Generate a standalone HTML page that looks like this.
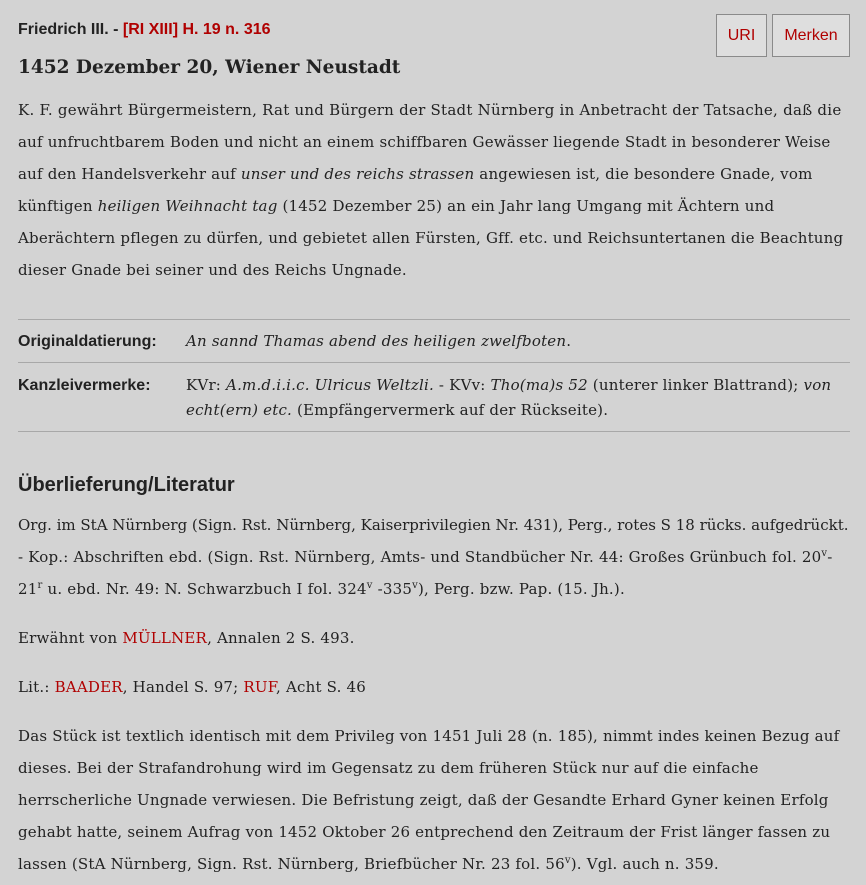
<!DOCTYPE html>
<html><head><meta charset="utf-8"><style>
body{margin:0;background:#d3d3d3;width:866px;height:885px;overflow:hidden;position:relative;color:#222;}
.s{font-family:"Liberation Sans",sans-serif;}
.f{font-family:"DejaVu Serif","Liberation Serif",serif;font-size:15px;letter-spacing:0.2px;}
.l{position:absolute;left:18px;white-space:nowrap;line-height:20px;}
.s.l{letter-spacing:0;}
.r{color:#b00000;}
.hr{position:absolute;left:18px;width:832px;height:1px;background:#a8a8a8;}
.btn{position:absolute;top:14px;height:43px;border:1px solid #8a8a8a;background:#dedede;color:#b00000;font-family:"Liberation Sans",sans-serif;font-size:16px;line-height:41px;text-align:center;box-sizing:border-box;}
sup{font-size:10px;line-height:0;}
i{font-style:italic;}
</style></head><body>
<div class="l s" style="top:20px;font-size:16px;font-weight:bold;">Friedrich III. - <span class="r">[RI XIII] H. 19 n. 316</span></div>
<div class="btn" style="left:716px;width:51px;">URI</div>
<div class="btn" style="left:772px;width:78px;">Merken</div>
<div class="l f" style="top:56px;font-size:18.5px;letter-spacing:0;font-weight:bold;line-height:24px;">1452 Dezember 20, Wiener Neustadt</div>

<div class="l f" style="top:100px;letter-spacing:0.25px">K. F. gewährt Bürgermeistern, Rat und Bürgern der Stadt Nürnberg in Anbetracht der Tatsache, daß die</div>
<div class="l f" style="top:132px">auf unfruchtbarem Boden und nicht an einem schiffbaren Gewässer liegende Stadt in besonderer Weise</div>
<div class="l f" style="top:164px">auf den Handelsverkehr auf <i>unser und des reichs strassen</i> angewiesen ist, die besondere Gnade, vom</div>
<div class="l f" style="top:196px">künftigen <i>heiligen Weihnacht tag</i> (1452 Dezember 25) an ein Jahr lang Umgang mit Ächtern und</div>
<div class="l f" style="top:228px">Aberächtern pflegen zu dürfen, und gebietet allen Fürsten, Gff. etc. und Reichsuntertanen die Beachtung</div>
<div class="l f" style="top:260px">dieser Gnade bei seiner und des Reichs Ungnade.</div>

<div class="hr" style="top:319px"></div>
<div class="l s" style="top:332px;font-size:16px;font-weight:bold;">Originaldatierung:</div>
<div class="l f" style="top:331px;left:186px"><i>An sannd Thamas abend des heiligen zwelfboten</i>.</div>
<div class="hr" style="top:362px"></div>
<div class="l s" style="top:376px;font-size:16px;font-weight:bold;">Kanzleivermerke:</div>
<div class="l f" style="top:375px;left:186px">KVr: <i>A.m.d.i.i.c. Ulricus Weltzli.</i> - KVv: <i>Tho(ma)s 52</i> (unterer linker Blattrand); <i>von</i></div>
<div class="l f" style="top:400px;left:186px"><i>echt(ern) etc.</i> (Empfängervermerk auf der Rückseite).</div>
<div class="hr" style="top:431px"></div>

<div class="l s" style="top:473px;font-size:20px;font-weight:bold;line-height:24px;">Überlieferung/Literatur</div>
<div class="l f" style="top:515px;letter-spacing:0">Org. im StA Nürnberg (Sign. Rst. Nürnberg, Kaiserprivilegien Nr. 431), Perg., rotes S 18 rücks. aufgedrückt.</div>
<div class="l f" style="top:547px">- Kop.: Abschriften ebd. (Sign. Rst. Nürnberg, Amts- und Standbücher Nr. 44: Großes Grünbuch fol. 20<sup>v</sup>-</div>
<div class="l f" style="top:579px">21<sup>r</sup> u. ebd. Nr. 49: N. Schwarzbuch I fol. 324<sup>v</sup> -335<sup>v</sup>), Perg. bzw. Pap. (15. Jh.).</div>
<div class="l f" style="top:628px">Erwähnt von <span class="r">MÜLLNER</span>, Annalen 2 S. 493.</div>
<div class="l f" style="top:677px">Lit.: <span class="r">BAADER</span>, Handel S. 97; <span class="r">RUF</span>, Acht S. 46</div>
<div class="l f" style="top:726px">Das Stück ist textlich identisch mit dem Privileg von 1451 Juli 28 (n. 185), nimmt indes keinen Bezug auf</div>
<div class="l f" style="top:758px">dieses. Bei der Strafandrohung wird im Gegensatz zu dem früheren Stück nur auf die einfache</div>
<div class="l f" style="top:790px">herrscherliche Ungnade verwiesen. Die Befristung zeigt, daß der Gesandte Erhard Gyner keinen Erfolg</div>
<div class="l f" style="top:822px">gehabt hatte, seinem Aufrag von 1452 Oktober 26 entprechend den Zeitraum der Frist länger fassen zu</div>
<div class="l f" style="top:854px">lassen (StA Nürnberg, Sign. Rst. Nürnberg, Briefbücher Nr. 23 fol. 56<sup>v</sup>). Vgl. auch n. 359.</div>
</body></html>
